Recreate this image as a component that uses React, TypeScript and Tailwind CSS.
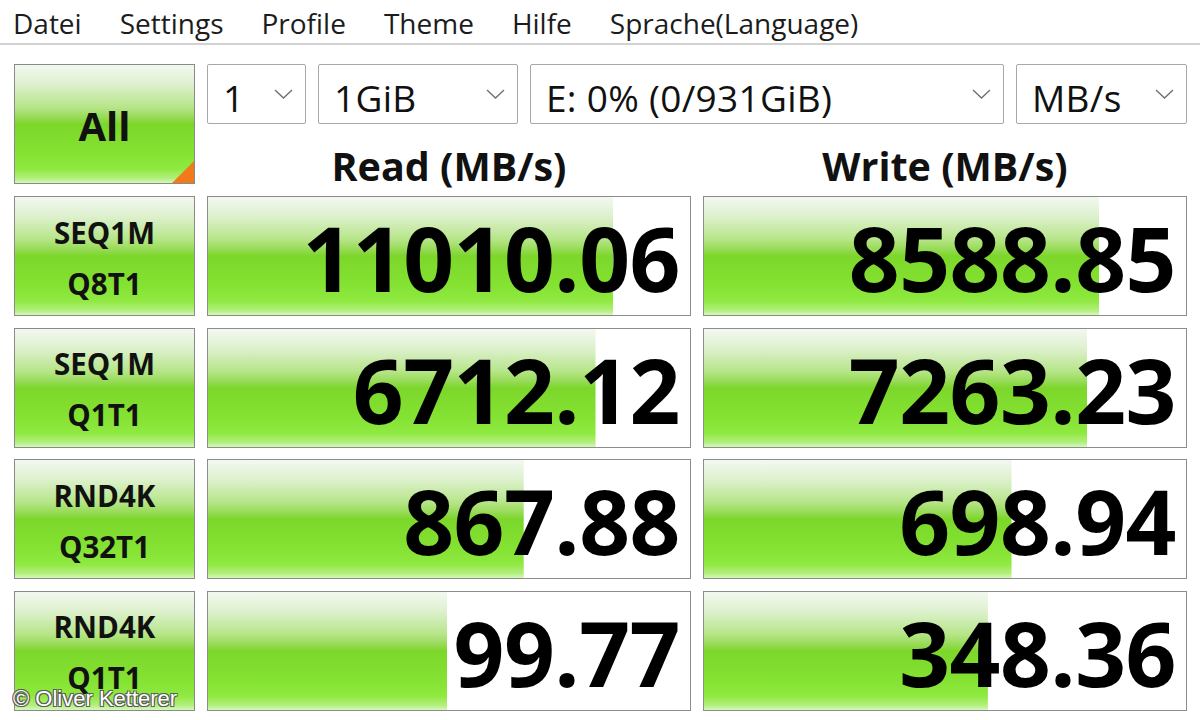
import React from "react";

const GREEN =
  "bg-[linear-gradient(to_bottom,#f3f8f0_0%,#def1cf_16%,#b6e588_36%,#94da52_45%,#7cd72a_50%,#84e232_74%,#8fe940_88%,#b2ef7c_96%,#d6f7bc_100%)]";

function Chevron() {
  return (
    <svg width="19" height="10" viewBox="0 0 19 10" className="shrink-0">
      <polyline points="1,1 9.5,9 18,1" fill="none" stroke="#6e6e6e" strokeWidth="1.3" />
    </svg>
  );
}

function Drop({ w, label }: { w: string; label: string }) {
  return (
    <div
      className={`${w} h-[60px] flex items-center justify-between pl-[15px] pr-[12px] pt-[6px] border border-[#a8a8a8] rounded-[2px] bg-white`}
    >
      <span className="text-[37px] leading-none text-[#111] whitespace-nowrap tracking-[0.3px]">{label}</span>
      <span className="-mt-[6px]">
        <Chevron />
      </span>
    </div>
  );
}

function Value({ v, pct }: { v: string; pct: number }) {
  return (
    <div
      className={`w-[484px] h-full border border-[#8c8c8c] bg-white ${GREEN} bg-no-repeat flex items-center justify-end pr-[10px] pt-[3px]`}
      style={{ backgroundSize: `${pct}% 100%` }}
    >
      <span className="text-[89px] font-bold leading-none text-black tracking-[-0.5px]">{v}</span>
    </div>
  );
}

const rows = [
  { a: "SEQ1M", b: "Q8T1", r: "11010.06", rp: 84.1, w: "8588.85", wp: 82.0 },
  { a: "SEQ1M", b: "Q1T1", r: "6712.12", rp: 80.4, w: "7263.23", wp: 79.5 },
  { a: "RND4K", b: "Q32T1", r: "867.88", rp: 65.5, w: "698.94", wp: 63.8 },
  { a: "RND4K", b: "Q1T1", r: "99.77", rp: 49.6, w: "348.36", wp: 58.9 },
];

export default function App() {
  return (
    <div
      className="relative w-[1200px] h-[720px] bg-white overflow-hidden"
      style={{ fontFamily: '"Open Sans", "Noto Sans", sans-serif' }}
    >
      {/* menu */}
      <div className="h-[45px] border-b-2 border-[#d2d2d2] flex items-start pl-[13px] pt-[9px] gap-[38px] text-[28px] leading-none text-[#1c1c1c]">
        <span>Datei</span>
        <span>Settings</span>
        <span>Profile</span>
        <span>Theme</span>
        <span>Hilfe</span>
        <span>Sprache(Language)</span>
      </div>

      <div className="pl-[14px] pt-[19px] flex flex-col">
        {/* top */}
        <div className="flex gap-[12px] h-[120px]">
          <div
            className={`relative w-[181px] h-[120px] border border-[#8a8a8a] ${GREEN} flex items-center justify-center pt-[4px]`}
          >
            <span className="text-[40px] font-bold leading-none text-[#111]">All</span>
            <svg width="22" height="22" viewBox="0 0 22 22" className="absolute right-0 bottom-0">
              <polygon points="22,0 22,22 0,22" fill="#f07a1c" />
            </svg>
          </div>
          <div className="w-[980px] flex flex-col">
            <div className="flex gap-[12px] h-[60px]">
              <Drop w="w-[99px]" label="1" />
              <Drop w="w-[200px]" label="1GiB" />
              <Drop w="w-[474px]" label="E: 0% (0/931GiB)" />
              <Drop w="w-[171px]" label="MB/s" />
            </div>
            <div className="flex gap-[12px] h-[60px]">
              <div className="w-[484px] flex justify-center pt-[23px]">
                <span className="text-[39.5px] font-bold leading-none text-[#111] whitespace-nowrap">Read (MB/s)</span>
              </div>
              <div className="w-[484px] flex justify-center pt-[23px]">
                <span className="text-[39.5px] font-bold leading-none text-[#111] whitespace-nowrap">Write (MB/s)</span>
              </div>
            </div>
          </div>
        </div>

        {/* rows */}
        <div className="flex flex-col gap-[11.67px] mt-[12px]">
          {rows.map((row, i) => (
            <div key={i} className="flex gap-[12px] h-[120px]">
              <div
                className={`w-[181px] h-full border border-[#8a8a8a] ${GREEN} flex flex-col items-center justify-center pt-[3px]`}
              >
                <span className="text-[29.5px] font-bold leading-[51px] text-[#111]">{row.a}</span>
                <span className="text-[29.5px] font-bold leading-[51px] text-[#111]">{row.b}</span>
              </div>
              <Value v={row.r} pct={row.rp} />
              <Value v={row.w} pct={row.wp} />
            </div>
          ))}
        </div>
      </div>

      <div
        className="absolute left-[13px] top-[688px] text-[22px] leading-none text-white [text-shadow:-1px_-1px_0_#5a5a5a,1px_-1px_0_#5a5a5a,-1px_1px_0_#5a5a5a,1px_1px_0_#5a5a5a]"
        style={{ fontFamily: '"Liberation Sans", Arial, sans-serif' }}
      >
        © Oliver Ketterer
      </div>
    </div>
  );
}
